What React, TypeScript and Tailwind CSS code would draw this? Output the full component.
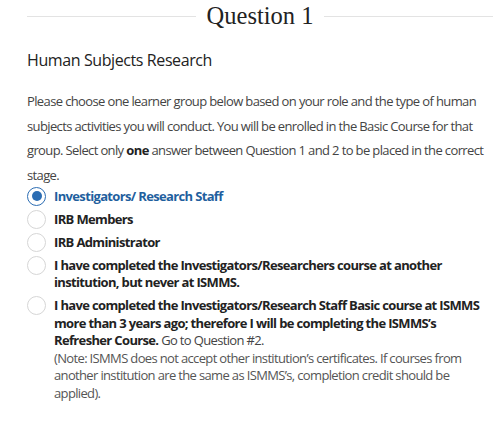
import { useState } from 'react';

const options = [
  { id: 'inv', label: <>Investigators/ Research Staff</> },
  { id: 'irbm', label: <>IRB Members</> },
  { id: 'irba', label: <>IRB Administrator</> },
  {
    id: 'other',
    label: <>I have completed the Investigators/Researchers course at another institution, but never at ISMMS.</>,
  },
  {
    id: 'refresher',
    label: (
      <>
        I have completed the Investigators/Research Staff Basic course at ISMMS more than 3 years ago; therefore I will be
        completing the ISMMS’s Refresher Course. <span className="font-normal text-[#444]">Go to Question #2.</span>
        <span className="block font-normal text-[#555]">
          (Note: ISMMS does not accept other institution’s certificates. If courses from another institution are the same
          as ISMMS’s, completion credit should be applied).
        </span>
      </>
    ),
  },
];

export default function App() {
  const [selected, setSelected] = useState('inv');

  return (
    <div className="w-[500px] h-[426px] bg-white pl-[27px] pr-[14px] pt-0 font-['Open_Sans',sans-serif] text-[#333]">
      <div className="flex items-center gap-[11px] h-[32px] mr-[-7px]">
        <div className="flex-1 h-px bg-[#e3e3e3]" />
        <h1 className="font-['Liberation_Serif',serif] text-[24.5px] leading-none text-[#222]">Question 1</h1>
        <div className="flex-1 h-px bg-[#e3e3e3]" />
      </div>

      <h2 className="mt-[17px] text-[16px] leading-[22px] tracking-[-0.025em] text-[#222]">Human Subjects Research</h2>

      <p className="mt-[18px] text-[13px] leading-[24.7px] tracking-[-0.048em] text-[#444]">
        Please choose one learner group below based on your role and the type of human subjects activities you will
        conduct. You will be enrolled in the Basic Course for that group. Select only{' '}
        <strong className="font-bold text-[#222]">one</strong> answer between Question 1 and 2 to be placed in the correct
        stage.
      </p>

      <div className="mt-0 pr-[5px] flex flex-col gap-[5px]">
        {options.map((o) => {
          const active = selected === o.id;
          return (
            <label key={o.id} className="flex items-start gap-[8px] cursor-pointer" onClick={() => setSelected(o.id)}>
              <span
                className={`mt-[-1px] shrink-0 w-[19px] h-[19px] rounded-full border flex items-center justify-center ${
                  active ? 'border-[#2c6db3] border-[1.5px]' : 'border-[#d6d6d6]'
                }`}
              >
                {active && <span className="w-[10px] h-[10px] rounded-full bg-[#2c6db3]" />}
              </span>
              <span
                className={`text-[13px] leading-[17.6px] tracking-[-0.05em] font-bold ${
                  active ? 'text-[#1f5f9e]' : 'text-[#222]'
                }`}
              >
                {o.label}
              </span>
            </label>
          );
        })}
      </div>
    </div>
  );
}
